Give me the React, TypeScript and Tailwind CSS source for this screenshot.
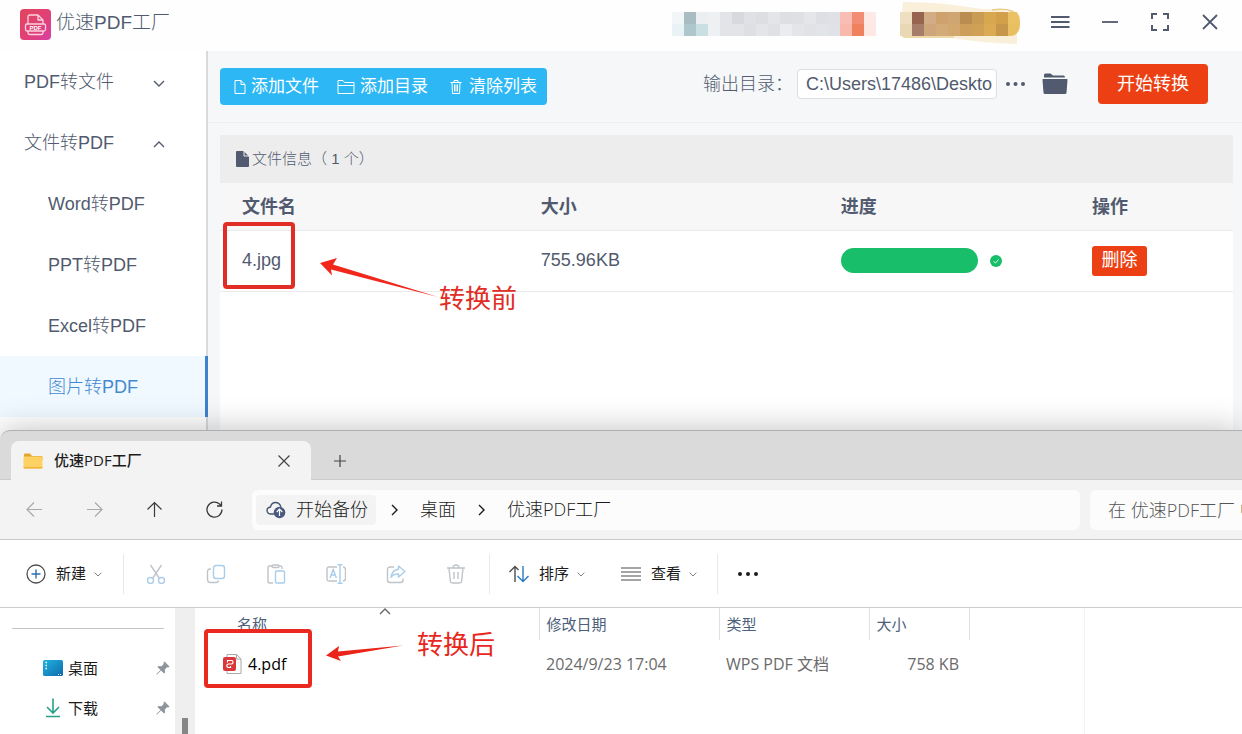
import React from "react";
import clsx from "clsx";

const appFont = "font-['Liberation_Sans','Noto_Sans_CJK_SC',sans-serif]";
const explorerFont = "font-['Open_Sans','Noto_Sans_CJK_SC',sans-serif]";

const menu = [
  { label: "PDF转文件", chevron: "down" },
  { label: "文件转PDF", chevron: "up" },
  { label: "Word转PDF", child: true },
  { label: "PPT转PDF", child: true },
  { label: "Excel转PDF", child: true },
  { label: "图片转PDF", child: true, active: true },
];

const userCells = [
  ["#f3f6f8", "#a9bcc2", "#eceff1", "#eff0f2", "#e3e4e8", "#d8d9de", "#e0e1e5", "#dcdee2", "#e4e5e9", "#dedfe3", "#dfe0e4", "#e5e6e9", "#dddfe4", "#dfe1e6", "#f9beb3", "#f38c75", "#fde9e5"],
  ["#e9f2f4", "#adc7cc", "#cadfe1", "#eef1f3", "#e2e4e7", "#e3e4e7", "#dddfe3", "#e4e5e8", "#dfe1e5", "#ebecee", "#e3e5e8", "#e1e2e6", "#e3e4e8", "#dfe3e8", "#f8b8ab", "#ef815f", "#fde8e3"],
];

const vipCells = [
  ["#eddfc0", "#96644f", "#d2ac85", "#cfa26d", "#cfa571", "#ba8c50", "#c99b53", "#d8a850", "#d2a04b", "#ebc263"],
  ["#ead8b4", "#a67d68", "#cda67c", "#d3ab78", "#d2a86f", "#cc9e59", "#d0a154", "#dbaa52", "#c6964a", "#e9bf60"],
];

function Mosaic({ rows }: { rows: string[][] }) {
  return (
    <>
      {rows.map((row, r) =>
        row.map((fill, c) => (
          <rect key={`${r}-${c}`} x={c * 12} y={12 + r * 12} width="12" height="12" fill={fill} />
        ))
      )}
    </>
  );
}

function Chevron({ dir, className }: { dir: string; className?: string }) {
  const paths: Record<string, string> = {
    down: "M1 4l5 5 5-5",
    up: "M1 9l5-5 5 5",
    right: "M4 1l5 5-5 5",
  };
  return (
    <svg viewBox="0 0 12 12" fill="none" stroke="currentColor" strokeWidth="1.4" className={clsx("shrink-0", className)}>
      <path d={paths[dir]} />
    </svg>
  );
}

function Logo() {
  return (
    <svg viewBox="0 0 31 31" className="size-[31px]">
      <defs>
        <linearGradient id="logo" x1="0" y1="0" x2="1" y2="1">
          <stop offset="0" stopColor="#e2455c" />
          <stop offset="0.6" stopColor="#e0407a" />
          <stop offset="1" stopColor="#d93fa6" />
        </linearGradient>
      </defs>
      <rect width="31" height="31" rx="4" fill="url(#logo)" />
      <g fill="none" stroke="#fbd3dc" strokeWidth="1.3" strokeLinejoin="round">
        <path d="M8 15V8q0-2 2-2h8l5 5v4M18 6v5h5" />
        <rect x="5.500" y="15" width="20" height="7" rx="1.500" />
        <path d="M8 22v1.500q0 2 2 2h11q2 0 2-2V22" />
      </g>
      <text x="15.500" y="21" textAnchor="middle" fontSize="6" fontWeight="bold" fill="#fff" className="font-['Liberation_Sans',sans-serif]">PDF</text>
    </svg>
  );
}

function TitleBar() {
  return (
    <header className="flex h-[51px] items-start justify-between bg-[#fefefe] pl-5 pr-[22px]">
      <div className="flex h-12 items-center gap-[5px]">
        <Logo />
        <h1 className="pb-[3px] text-[19px] font-light leading-6">优速PDF工厂</h1>
      </div>
      <div className="flex">
        <svg viewBox="0 0 204 44" className="mr-6 h-11 w-[204px]">
          <Mosaic rows={userCells} />
        </svg>
        <svg viewBox="0 0 120 44" className="mr-[30px] h-11 w-[120px] overflow-visible">
          <defs>
            <clipPath id="vip">
              <path d="M0 9h110q10 1 10 14 0 13-10 13H0z" />
            </clipPath>
          </defs>
          <path d="M3 2q40 0 78 7h22l14 27v8q-34-1-66-6H6q-6-1-6-5z" fill="#faf0da" />
          <path d="M2 36h52v2H7q-4 0-5-2z" fill="#eed9a8" />
          <path d="M92 10q22-3 27 8" fill="none" stroke="#e9cb8a" strokeWidth="1.500" />
          <g clipPath="url(#vip)">
            <Mosaic rows={vipCells} />
          </g>
        </svg>
        <div className="flex h-[43px] items-center gap-[30px]">
          <button aria-label="菜单">
            <svg viewBox="0 0 20 20" className="size-5" stroke="currentColor" strokeWidth="2">
              <path d="M1 5h18.500M1 10h18.500M1 15h18.500" />
            </svg>
          </button>
          <button aria-label="最小化">
            <svg viewBox="0 0 20 20" className="size-5" stroke="currentColor" strokeWidth="1.800">
              <path d="M2 10h16" />
            </svg>
          </button>
          <button aria-label="全屏">
            <svg viewBox="0 0 20 20" className="size-5" fill="none" stroke="currentColor" strokeWidth="2">
              <path d="M2 7V2h5M13 2h5v5M18 13v5h-5M7 18H2v-5" />
            </svg>
          </button>
          <button aria-label="关闭">
            <svg viewBox="0 0 20 20" className="size-5" stroke="currentColor" strokeWidth="1.800">
              <path d="M3 3l14 14M17 3L3 17" />
            </svg>
          </button>
        </div>
      </div>
    </header>
  );
}

function Sidebar() {
  return (
    <nav className="flex w-[208px] shrink-0 flex-col bg-white text-[18px] font-light">
      {menu.map((item) => (
        <button
          key={item.label}
          className={clsx(
            "flex h-[61px] items-center justify-between pr-[41px] pt-0.5 text-left",
            item.child ? "pl-12" : "pl-6",
            item.active ? "border-r-[3px] border-[#3d82cd] bg-[#f0f9ff] text-[#4389d0]" : "border-r-2 border-[#d8dadd]"
          )}
        >
          {item.label}
          {item.chevron && <Chevron dir={item.chevron} className="size-3" />}
        </button>
      ))}
      <div className="h-[13px] border-r-2 border-[#d8dadd]" />
    </nav>
  );
}

function Toolbar() {
  const action = "flex h-[37px] w-[109px] items-center justify-end gap-[5px] pr-2.5 text-[17px]";
  return (
    <div className="flex h-[72px] items-start justify-between border-b border-[#eceef1] pl-3 pr-[34px] pt-[13px]">
      <div className="mt-1 flex rounded-sm bg-[#2db7f5] text-white">
        <button className={action}>
          <svg viewBox="0 0 12 16" fill="none" stroke="currentColor" className="h-4 w-3">
            <path d="M1 1.500h6l4 4v9H1zM7 1.500v4h4" />
          </svg>
          添加文件
        </button>
        <button className={action}>
          <svg viewBox="0 0 18 16" fill="none" stroke="currentColor" className="h-4 w-[18px]">
            <path d="M1 14.500v-13h5l1.500 2H17v11zM1 6.500h16" />
          </svg>
          添加目录
        </button>
        <button className={action}>
          <svg viewBox="0 0 12 16" fill="none" stroke="currentColor" className="mr-0.5 h-4 w-3">
            <path d="M.5 3.500h11M4 3V1.500h4V3M2 3.500l.5 11h7l.5-11M4.500 5.500v7M6 5.500v7M7.500 5.500v7" />
          </svg>
          清除列表
        </button>
      </div>
      <div className="flex h-10 items-center text-[18px]">
        <label htmlFor="out" className="font-light">输出目录：</label>
        <input
          id="out"
          defaultValue="C:\Users\17486\Deskto"
          className="ml-1 h-[30px] w-[200px] rounded-sm border border-[#dcdee2] bg-white pl-2 pr-1"
        />
        <button aria-label="更多" className="ml-2">
          <svg viewBox="0 0 22 6" fill="currentColor" className="h-1.5 w-[22px]">
            <circle cx="3" cy="3" r="2" />
            <circle cx="10.500" cy="3" r="2" />
            <circle cx="18" cy="3" r="2" />
          </svg>
        </button>
        <button aria-label="打开目录" className="ml-[15px]">
          <svg viewBox="0 0 26 22" fill="currentColor" className="h-[22px] w-[26px]">
            <path d="M2 4.500V2q0-1.500 1.500-1.500h5L11 2.500h10.500Q23 2.500 23 4.500z" />
            <path d="M1 6h24q.6 0 .5.7l-1 13Q24.400 21 23 21H3q-1.300 0-1.500-1.300L.5 6.700Q.4 6 1 6z" />
          </svg>
        </button>
        <button className="ml-[30px] h-10 w-[110px] rounded bg-[#ed3f14] text-white">开始转换</button>
      </div>
    </div>
  );
}

function FileTable() {
  return (
    <section className="ml-3 mr-[9px] mt-3 flex-1 bg-white">
      <div className="flex h-12 items-center gap-[3px] bg-[#ededee] pl-4 text-[15px] font-light">
        <svg viewBox="0 0 13 16" className="h-4 w-[13px]">
          <path d="M1 0h6.500L13 5.500V15q0 1-1 1H1q-1 0-1-1V1q0-1 1-1z" fill="#515a6e" />
          <path d="M8 0v5h5" fill="none" stroke="#ededee" />
        </svg>
        文件信息（ 1 个）
      </div>
      <table className="w-full table-fixed text-left text-[18px]">
        <thead>
          <tr className="h-[47px] border-b border-[#e8eaec] bg-[#f7f7f8]">
            <th className="w-[29.5%] pl-[22px] pt-0.5">文件名</th>
            <th className="w-[29.6%] pl-[22px] pt-0.5">大小</th>
            <th className="w-[24.8%] pl-[22px] pt-0.5">进度</th>
            <th className="pl-[22px] pt-0.5">操作</th>
          </tr>
        </thead>
        <tbody>
          <tr className="h-[61px] border-b border-[#e8eaec]">
            <td className="relative pl-[22px]">
              4.jpg
              <div className="absolute left-[3px] top-[-9px] h-[67px] w-[72px] rounded-sm border-4 border-[#e02d25]" />
              <svg viewBox="0 0 120 42" className="absolute left-[99px] top-[25px] h-[42px] w-[120px]">
                <path d="M1 7l17-5-4 6.500L119 41 12 13.500l1 6z" fill="#f1271b" />
              </svg>
              <span className="absolute left-[219px] top-[50px] whitespace-nowrap text-[26px] leading-9 text-[#e02d25]">转换前</span>
            </td>
            <td className="pl-[22px]">755.96KB</td>
            <td className="pl-[22px]">
              <div className="flex items-center gap-3">
                <div className="h-[25px] w-[137px] rounded-full bg-[#19be6b]" />
                <svg viewBox="0 0 12 12" className="size-3">
                  <circle cx="6" cy="6" r="6" fill="#19be6b" />
                  <path d="M3.500 6.500l2 1.500 3-3.500" fill="none" stroke="#fff" strokeWidth=".8" />
                </svg>
              </div>
            </td>
            <td className="pl-[22px]">
              <button className="block h-[30px] w-[55px] rounded-[3px] bg-[#ed3f14] text-white">删除</button>
            </td>
          </tr>
        </tbody>
      </table>
    </section>
  );
}

function Converter() {
  return (
    <div className={clsx("text-[#515a6e]", appFont)}>
      <TitleBar />
      <div className="flex">
        <Sidebar />
        <main className="flex min-w-0 flex-1 flex-col bg-[#f5f7f9]">
          <Toolbar />
          <FileTable />
        </main>
      </div>
    </div>
  );
}

function TabStrip() {
  return (
    <div className="flex h-[50px] items-end rounded-tl-[10px] border-b border-t border-b-[#cbcbcb] border-t-[#b0b0b0] bg-[#dadada] pl-[11px]">
      <div className="-mb-px flex h-[39px] w-[300px] items-center rounded-t-lg bg-[#f3f3f3] pl-3 pr-5">
        <svg viewBox="0 0 20 16" className="h-4 w-5">
          <path d="M1 1.500Q1 .5 2 .5h5L9 3h9.500q1 0 1 1V7H1z" fill="#e3a52c" />
          <rect x=".5" y="3.500" width="19" height="12" rx="1" fill="#fdd262" />
          <path d="M.5 14h19v.5q0 1-1 1h-17q-1 0-1-1z" fill="#f0b43e" />
        </svg>
        <span className="ml-[11px] text-[15px] font-medium">优速PDF工厂</span>
        <button aria-label="关闭标签页" className="ml-auto">
          <svg viewBox="0 0 14 14" stroke="#444" strokeWidth="1.200" className="size-3.5">
            <path d="M1.500 1.500l11 11M12.500 1.500l-11 11" />
          </svg>
        </button>
      </div>
      <button aria-label="新标签页" className="ml-[22px] flex h-[37px] items-center">
        <svg viewBox="0 0 14 14" stroke="#444" strokeWidth="1.200" className="size-3.5">
          <path d="M7 1v12M1 7h12" />
        </svg>
      </button>
    </div>
  );
}

function AddressBar() {
  return (
    <div className="flex h-[60px] items-center border-b border-[#c8c8c8] bg-[#f3f3f3] pl-[26px] text-[18px]">
      <div className="flex w-[226px] shrink-0 gap-[43px] text-[#3a3a3a]">
        <button aria-label="后退" className="text-[#aaa]">
          <svg viewBox="0 0 17 17" fill="none" stroke="currentColor" strokeWidth="1.200" className="size-[17px]">
            <path d="M16 8.500H1M8 1.500l-7 7 7 7" />
          </svg>
        </button>
        <button aria-label="前进" className="text-[#aaa]">
          <svg viewBox="0 0 17 17" fill="none" stroke="currentColor" strokeWidth="1.200" className="size-[17px]">
            <path d="M1 8.500h15M9 1.500l7 7-7 7" />
          </svg>
        </button>
        <button aria-label="向上">
          <svg viewBox="0 0 17 17" fill="none" stroke="currentColor" strokeWidth="1.200" className="size-[17px]">
            <path d="M8.500 16V1.500M1.500 8.500l7-7 7 7" />
          </svg>
        </button>
        <button aria-label="刷新">
          <svg viewBox="0 0 17 17" fill="none" stroke="currentColor" strokeWidth="1.300" className="size-[17px]">
            <path d="M16 8.500A7.500 7.500 0 1 1 13.500 3l1.500 1.500M15.500 .5v4.500H11" />
          </svg>
        </button>
      </div>
      <div className="flex h-10 min-w-0 flex-1 items-center rounded-md bg-[#fcfcfc] pl-1">
        <button className="flex h-[30px] w-[120px] items-center gap-2.5 rounded-sm bg-[#f3f3f3] pl-2.5 font-light">
          <svg viewBox="0 0 20 18" className="h-[18px] w-5" fill="none">
            <path d="M8 13H4.500Q1 12.500 1 9.500T4.500 6q1-4.500 5-4.500T15 6" stroke="#44546e" strokeWidth="1.300" />
            <circle cx="13.500" cy="11.500" r="5.800" fill="#4a5980" />
            <path d="M13.500 15V8.500M10.700 11l2.800-2.800 2.800 2.800" stroke="#fff" strokeWidth="1.200" />
          </svg>
          开始备份
        </button>
        <Chevron dir="right" className="ml-3 size-3" />
        <a href="#desktop" className="ml-5 font-light">桌面</a>
        <Chevron dir="right" className="ml-[19px] size-3" />
        <a href="#factory" className="ml-5 font-light">优速PDF工厂</a>
      </div>
      <input
        type="text"
        aria-label="搜索"
        placeholder="在 优速PDF工厂 中搜索"
        className="ml-2.5 h-10 w-[152px] shrink-0 rounded-l-md bg-[#fcfcfc] pl-[18px] font-light placeholder:text-[#555]"
      />
    </div>
  );
}

const iconButtons = [
  {
    label: "剪切",
    icon: (
      <>
        <path d="M4.500 1l8.700 13M15.500 1L6.800 14" stroke="#c0c4c8" />
        <circle cx="4.500" cy="16.500" r="3" stroke="#a9cdea" />
        <circle cx="15.500" cy="16.500" r="3" stroke="#a9cdea" />
      </>
    ),
  },
  {
    label: "复制",
    icon: (
      <>
        <path d="M5 5H4Q1.500 5 1.500 8v7.500q0 3 3 3h5q3 0 3-2" stroke="#c0c4c8" />
        <rect x="7.500" y="1.500" width="11" height="13" rx="2.500" stroke="#a9cdea" />
      </>
    ),
  },
  {
    label: "粘贴",
    icon: (
      <>
        <path d="M7 19H3.500Q2 19 2 17.500v-14Q2 2 3.500 2H6M13 2h1.500Q16 2 16 3.500V5" stroke="#c0c4c8" />
        <rect x="6" y="1" width="7" height="2.500" rx="1.200" stroke="#c0c4c8" />
        <rect x="9.500" y="7" width="9" height="12" rx="1.200" stroke="#a9cdea" />
      </>
    ),
  },
  {
    label: "重命名",
    icon: (
      <>
        <path d="M11 17H3q-2 0-2-2V5q0-2 2-2h8M17 3q2.500 0 2.500 2.500v9Q19.500 17 17 17" stroke="#c0c4c8" />
        <path d="M11.500 .8h5M14 .8v18.400M11.500 19.200h5M4 14l3.200-8.500L10.400 14M5.200 11h4" stroke="#a9cdea" />
      </>
    ),
  },
  {
    label: "共享",
    icon: (
      <>
        <path d="M8 3H4Q1.500 3 1.500 5.500V16q0 2.500 2.500 2.500h10.500Q17 18.500 17 16v-1.500" stroke="#c0c4c8" />
        <path d="M12.500 2l6.500 5.500-6.500 5.500v-3Q7.500 9.500 5 13.500 6 5.800 12.500 5.200z" stroke="#a9cdea" strokeLinejoin="round" />
      </>
    ),
  },
  {
    label: "删除文件",
    icon: (
      <path d="M1 4h18M7 4q0-3 3-3t3 3M3 4l1.300 13q.2 2 2 2h7.400q1.800 0 2-2L17 4M8 8v7M12 8v7" stroke="#c0c4c8" />
    ),
  },
];

function CommandBar() {
  const separator = "h-10 w-px bg-[#e8e8e8]";
  const textButton = "flex items-center gap-2.5 text-[15px]";
  return (
    <div className="flex h-[68px] items-center border-b border-[#cdcdcd] bg-white pl-[26px]">
      <button className={clsx(textButton, "w-[97px]")}>
        <svg viewBox="0 0 20 20" fill="none" className="size-5">
          <circle cx="10" cy="10" r="9" stroke="#4d4d4d" strokeWidth="1.300" />
          <path d="M10 5.500v9M5.500 10h9" stroke="#2a6fae" strokeWidth="1.400" />
        </svg>
        新建
        <Chevron dir="down" className="-ml-0.5 size-2 text-[#777]" />
      </button>
      <div className={separator} />
      <div className="flex gap-10 pl-[22px] pr-[23px]">
        {iconButtons.map((b) => (
          <button key={b.label} aria-label={b.label}>
            <svg viewBox="0 0 20 20" fill="none" strokeWidth="1.400" className="size-5">{b.icon}</svg>
          </button>
        ))}
      </div>
      <div className={separator} />
      <button className={clsx(textButton, "ml-[19px] w-[112px]")}>
        <svg viewBox="0 0 20 18" fill="none" strokeWidth="1.400" className="h-[18px] w-5">
          <path d="M6 17V1.500M.5 7L6 1.500 9.500 5" stroke="#4d4d4d" />
          <path d="M14 1v15.500M8.500 11l5.500 5.500 5.500-5.500" stroke="#2a7cc2" />
        </svg>
        排序
        <Chevron dir="down" className="-ml-0.5 size-2 text-[#777]" />
      </button>
      <button className={clsx(textButton, "w-24")}>
        <svg viewBox="0 0 20 14" stroke="#4d4d4d" strokeWidth="1.200" className="h-3.5 w-5">
          <path d="M0 1h20M0 5h20M0 9h20M0 13h20" />
        </svg>
        查看
        <Chevron dir="down" className="-ml-0.5 size-2 text-[#777]" />
      </button>
      <div className={separator} />
      <button aria-label="查看更多" className="ml-[19px]">
        <svg viewBox="0 0 22 6" fill="#1c1c1c" className="h-1.5 w-[22px]">
          <circle cx="3" cy="3" r="2" />
          <circle cx="11" cy="3" r="2" />
          <circle cx="19" cy="3" r="2" />
        </svg>
      </button>
    </div>
  );
}

function Pin() {
  return (
    <svg viewBox="0 0 14 14" className="ml-auto size-3.5">
      <path d="M8.500 .5l5 5-1.300 1L11 6.300 8.800 8.500 9 11.500l-1 1-3-3L1 13.500l-.6-.5L4.500 9l-3-3 1-1 3 .2L7.700 3 7.500 1.800z" fill="#8d949c" />
    </svg>
  );
}

function QuickAccess() {
  const row = "flex h-10 items-center gap-[5px] pl-[43px] pr-[5px] text-[15px]";
  return (
    <div className="flex shrink-0">
      <div className="w-[175px] bg-white">
        <hr className="mb-[19px] ml-3 mr-[11px] mt-5 border-[#c4c4c4]" />
        <a href="#desktop" className={row}>
          <svg viewBox="0 0 20 16" className="h-4 w-5">
            <defs>
              <linearGradient id="desk" x1="0" y1="0" x2="1" y2="1">
                <stop offset="0" stopColor="#1fb6dc" />
                <stop offset="1" stopColor="#1068ae" />
              </linearGradient>
            </defs>
            <rect width="20" height="16" rx="1.500" fill="url(#desk)" />
            <path d="M2.500 2.500h1.500M2.500 5.500h1.500M2.500 8.500h1.500" stroke="#fff" strokeWidth="1.500" />
            <path d="M15 14.500h1M17 14.500h1" stroke="#fff" />
          </svg>
          桌面
          <Pin />
        </a>
        <a href="#downloads" className={row}>
          <svg viewBox="0 0 20 20" fill="none" stroke="#27a18a" strokeWidth="1.600" className="size-5">
            <path d="M10 .5v14M4 9l6 6 6-6M3 18.500h14" />
          </svg>
          下载
          <Pin />
        </a>
      </div>
      <div className="flex w-5 flex-col items-center bg-[#efefef] pt-[110px]">
        <div className="w-1.5 flex-1 bg-[#868686]" />
      </div>
    </div>
  );
}

function FileList() {
  const head = "border-r border-[#e0e0e0] pl-[7px] font-normal";
  return (
    <div className="min-w-0 flex-1">
      <table className="w-[774px] table-fixed text-left">
        <thead>
          <tr className="h-8 text-[15px] text-[#4c607a]">
            <th className="relative w-[344px] border-r border-[#e0e0e0] pl-[42px] font-normal">
              名称
              <Chevron dir="up" className="absolute left-[184px] top-[-3px] size-3 text-[#666]" />
            </th>
            <th className={clsx(head, "w-[180px]")}>修改日期</th>
            <th className={clsx(head, "w-[150px]")}>类型</th>
            <th className={clsx(head, "w-[100px]")}>大小</th>
          </tr>
        </thead>
        <tbody>
          <tr className="h-12 text-[16px] text-[#6b6b6b]">
            <td className="relative pl-7 text-black">
              <div className="flex items-center gap-1.5">
                <svg viewBox="0 0 19 20" className="h-5 w-[19px]">
                  <path d="M4 .5h9.500l4.500 4.500v14.500H4z" fill="#fff" stroke="#a8a8a8" />
                  <path d="M13.500 .5v4.500H18" fill="none" stroke="#a8a8a8" />
                  <rect x="0" y="3" width="13" height="14" rx="2" fill="#d9393b" />
                  <path d="M4.500 8.500V6.500h4q1.500 0 1.500 1.700t-1.500 1.800h-3q-1.700 0-1.700 1.700t1.700 1.800h2v-1.500" fill="none" stroke="#fff" strokeWidth="1.200" />
                </svg>
                4.pdf
              </div>
              <div className="absolute left-[9px] top-[-11px] h-[59px] w-[108px] rounded-sm border-4 border-[#ea2a20]" />
              <svg viewBox="0 0 80 18" className="absolute left-[130px] top-1 h-[18px] w-20">
                <path d="M1 11.500L14 2l-1 5.500L78 1.500 13 12.500l3 4.500z" fill="#ea2418" />
              </svg>
              <span className="absolute left-[222px] top-[-14px] whitespace-nowrap text-[26px] leading-9 text-[#e8281e]">转换后</span>
            </td>
            <td className="pl-[7px]">2024/9/23 17:04</td>
            <td className="pl-[7px]">WPS PDF 文档</td>
            <td className="pr-2.5 text-right">758 KB</td>
          </tr>
        </tbody>
      </table>
    </div>
  );
}

function Explorer() {
  return (
    <div className={clsx("relative flex flex-1 flex-col rounded-tl-[10px] text-[#1c1c1c] shadow-[0_0_32px_rgba(0,0,0,0.25)]", explorerFont)}>
      <TabStrip />
      <AddressBar />
      <CommandBar />
      <div className="flex flex-1 bg-white">
        <QuickAccess />
        <FileList />
        <div className="w-[158px] border-l border-[#f2f2f2]" />
      </div>
    </div>
  );
}

export default function App() {
  return (
    <div className="flex min-h-screen flex-col overflow-hidden bg-white">
      <Converter />
      <Explorer />
    </div>
  );
}
